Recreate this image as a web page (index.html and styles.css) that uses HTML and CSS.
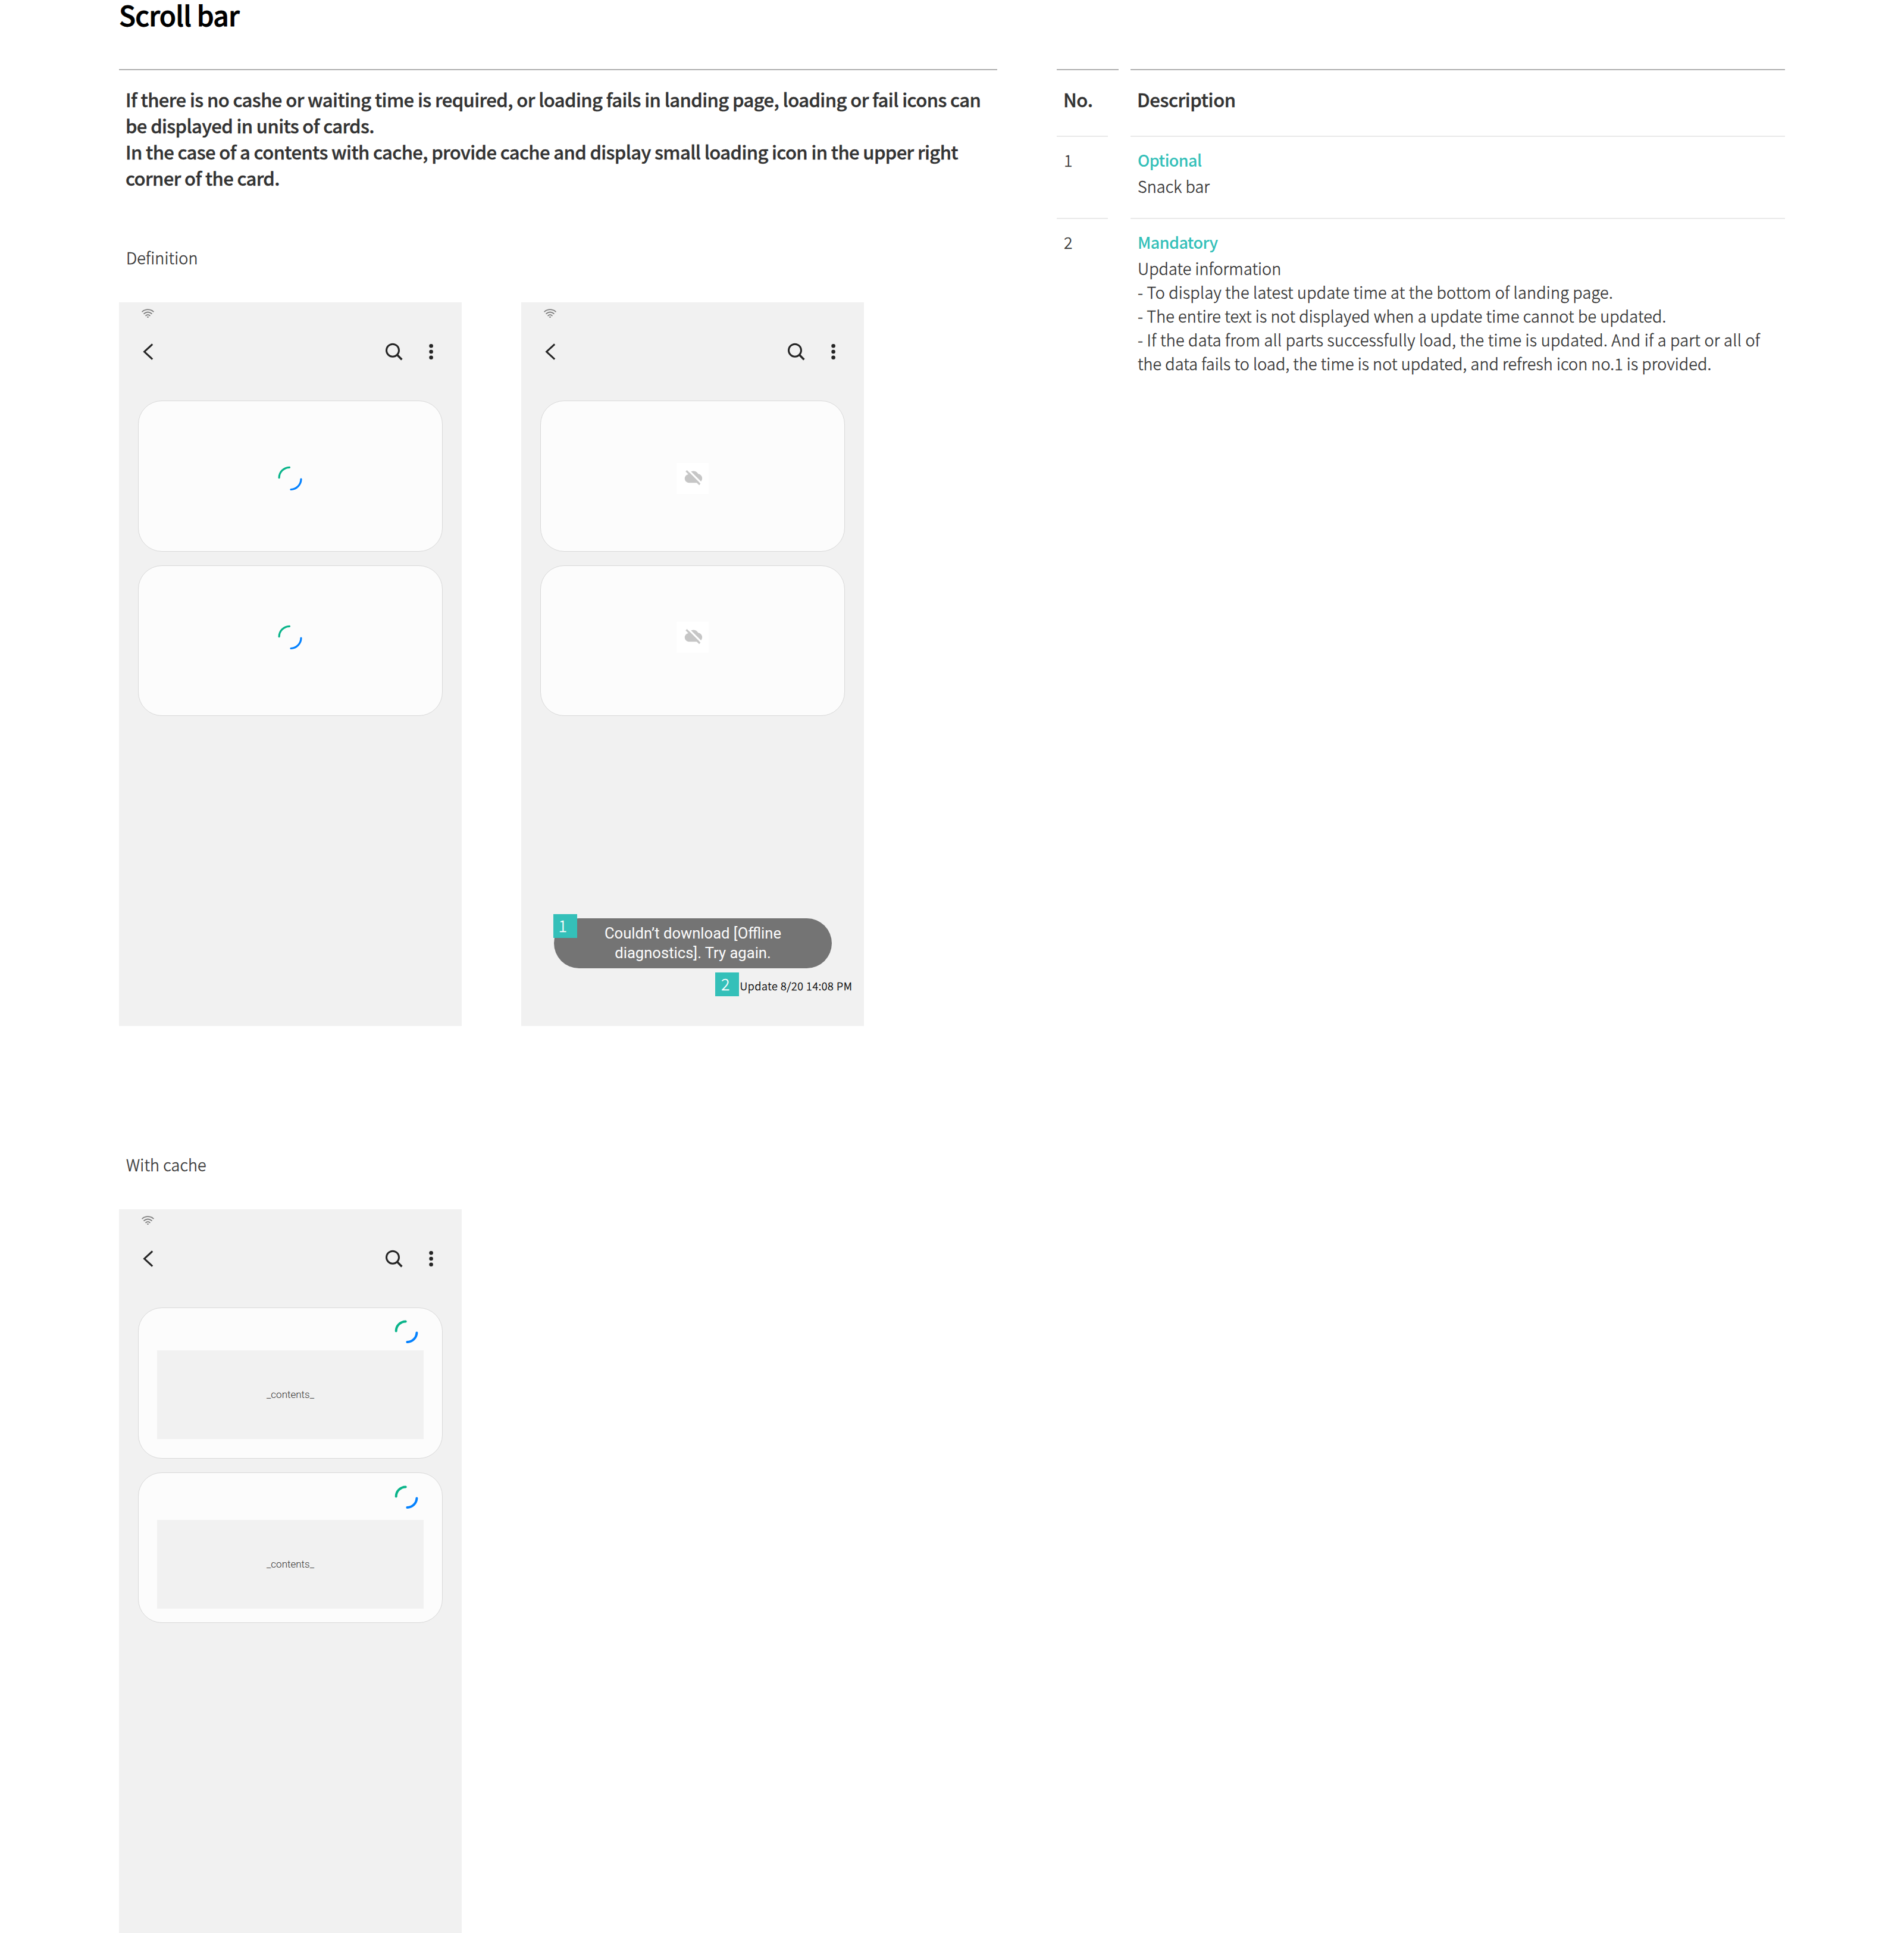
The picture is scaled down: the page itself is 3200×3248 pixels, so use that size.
FILE: index.html
```html
<!DOCTYPE html>
<html lang="en">
<head>
<meta charset="utf-8">
<title>Scroll bar</title>
<link rel="stylesheet" href="styles.css">
</head>
<body>
<svg class="defs" width="0" height="0">
  <symbol id="wifi" viewBox="0 0 21 15">
    <g fill="none" stroke="#808080" stroke-width="1.9" stroke-linecap="round">
      <path d="M1.2 4.6C6.3-.1 14.7-.1 19.8 4.6"/>
      <path d="M4.2 8c3.500-3.300 9.100-3.300 12.600 0"/>
      <path d="M7.200 11.300c1.800-1.700 4.800-1.700 6.600 0"/>
    </g>
    <circle cx="10.500" cy="13.700" r="1.300" fill="#808080"/>
  </symbol>
  <symbol id="back" viewBox="0 0 32 32">
    <path d="M24.200 3.400 10.600 16l13.600 12.600" fill="none" stroke="#252525" stroke-width="3"/>
  </symbol>
  <symbol id="search" viewBox="0 0 36 32">
    <g fill="none" stroke="#252525" stroke-width="3">
      <circle cx="16" cy="13.700" r="10.500"/>
      <path d="m23.500 21.200 7.900 8" stroke-width="3.400"/>
    </g>
  </symbol>
  <symbol id="more" viewBox="0 0 16 32">
    <g fill="#252525"><circle cx="8.600" cy="6.300" r="3.300"/><circle cx="8.600" cy="16" r="3.300"/><circle cx="8.600" cy="25.700" r="3.300"/></g>
  </symbol>
  <symbol id="spinner" viewBox="0 0 54 52">
    <g fill="none" stroke-width="3.200" stroke-linecap="round">
      <path d="M8.100 24.700A17.700 17.700 0 0 1 25.500 7.300" stroke="#0ab48a"/>
      <path d="M45 27A17.700 17.700 0 0 1 28 44.500" stroke="#0381fe"/>
    </g>
  </symbol>
  <symbol id="spinner-small" viewBox="0 0 54 52">
    <g fill="none" stroke-width="4" stroke-linecap="round">
      <path d="M9.700 24.500A16.200 16.200 0 0 1 25.700 8.400" stroke="#0ab48a"/>
      <path d="M44.400 27.500A16.200 16.200 0 0 1 28.400 43" stroke="#0381fe"/>
    </g>
  </symbol>
  <symbol id="cloud-off" viewBox="0 0 54 52">
    <path d="M20.400 33.200a7.200 7.200 0 0 1-.500-14.300A9.200 9.200 0 0 1 36.400 18.300a7.500 7.500 0 0 1 .300 14.900z" fill="#c6c6c6"/>
    <path d="M16.500 8.600 44.500 36.600" stroke="#fff" stroke-width="3.200"/>
    <path d="M16.400 13.200 39.200 36" stroke="#c6c6c6" stroke-width="3.200"/>
  </symbol>
</svg>

<main class="page">
  <section class="guide">
    <h1 class="title">Scroll bar</h1>
    <p class="intro"><span class="intro-first">If there is no cashe or waiting time is required, or loading fails in landing page, loading or fail icons can</span><br>be displayed in units of cards.<br>In the case of a contents with cache, provide cache and display small loading icon in the upper right<br>corner of the card.</p>

    <h2 class="caption caption-definition">Definition</h2>
    <div class="phones">
      <article class="phone">
        <div class="status"><svg width="21" height="15"><use href="#wifi"/></svg></div>
        <header class="appbar">
          <svg width="32" height="32"><use href="#back"/></svg>
          <svg class="search" width="36" height="32"><use href="#search"/></svg>
          <svg width="16" height="32"><use href="#more"/></svg>
        </header>
        <div class="cards">
          <div class="card"><svg width="54" height="52"><use href="#spinner"/></svg></div>
          <div class="card card-second"><svg width="54" height="52"><use href="#spinner"/></svg></div>
        </div>
      </article>
      <article class="phone">
        <div class="status"><svg width="21" height="15"><use href="#wifi"/></svg></div>
        <header class="appbar">
          <svg width="32" height="32"><use href="#back"/></svg>
          <svg class="search" width="36" height="32"><use href="#search"/></svg>
          <svg width="16" height="32"><use href="#more"/></svg>
        </header>
        <div class="cards">
          <div class="card"><svg class="slot-white" width="54" height="52"><use href="#cloud-off"/></svg></div>
          <div class="card card-second"><svg class="slot-white" width="54" height="52"><use href="#cloud-off"/></svg></div>
        </div>
        <footer class="footer">
          <div class="toast"><span class="badge badge-over">1</span>Couldn’t download [Offline<br>diagnostics]. Try again.</div>
          <div class="updated"><span class="badge badge-two">2</span><span class="updated-text">Update 8/20 14:08 PM</span></div>
        </footer>
      </article>
    </div>

    <h2 class="caption caption-cache">With cache</h2>
    <article class="phone">
      <div class="status"><svg width="21" height="15"><use href="#wifi"/></svg></div>
      <header class="appbar">
        <svg width="32" height="32"><use href="#back"/></svg>
        <svg class="search" width="36" height="32"><use href="#search"/></svg>
        <svg width="16" height="32"><use href="#more"/></svg>
      </header>
      <div class="cards">
        <div class="card cached"><svg class="corner" width="54" height="52"><use href="#spinner-small"/></svg><div class="contents">_contents_</div></div>
        <div class="card cached cached-second"><svg class="corner" width="54" height="52"><use href="#spinner-small"/></svg><div class="contents">_contents_</div></div>
      </div>
    </article>
  </section>

  <section class="spec">
    <div class="head">No.</div>
    <div class="head">Description</div>
    <div class="cell no">1</div>
    <div class="cell">
      <h3 class="tag">Optional</h3>
      <p class="name">Snack bar</p>
    </div>
    <div class="cell no">2</div>
    <div class="cell">
      <h3 class="tag">Mandatory</h3>
      <p class="name">Update information</p>
      <ul class="notes">
        <li>- To display the latest update time at the bottom of landing page.</li>
        <li class="snug">- The entire text is not displayed when a update time cannot be updated.</li>
        <li class="wide">- If the data from all parts successfully load, the time is updated. And if a part or all of<br><span class="tight">the data fails to load, the time is not updated, and refresh icon no.1 is provided.</span></li>
      </ul>
    </div>
  </section>
</main>
</body>
</html>
```
FILE: styles.css
```css
* { box-sizing: border-box; margin: 0; padding: 0; }

body {
  background: #fff;
  color: #333;
  font-family: "Noto Sans CJK SC", "Noto Sans", sans-serif;
  font-weight: 300;
  font-size: 27px;
  letter-spacing: 0.25px;
}

svg { display: block; flex: none; }
.defs { position: absolute; }

.page {
  display: grid;
  grid-template-columns: 1476px 1224px;
  column-gap: 100px;
  align-items: start;
  width: 3200px;
  height: 3248px;
  padding: 0 200px;
  overflow: hidden;
}

/* Left column */
.title {
  height: 116px;
  color: #000;
  font-size: 46px;
  font-weight: 500;
  line-height: 48px;
  letter-spacing: -0.75px;
  -webkit-text-stroke: 0.8px #000;
}

.intro {
  height: 296px;
  padding: 26.5px 0 0 11px;
  border-top: 2px solid #b0b0b0;
  font-size: 31px;
  font-weight: 500;
  line-height: 44px;
  letter-spacing: -0.63px;
  white-space: nowrap;
  -webkit-text-stroke: 0.4px #333;
}
.intro-first { letter-spacing: -0.59px; }

.caption {
  height: 96px;
  padding: 1px 0 0 12px;
  font-size: 27px;
  font-weight: 300;
  line-height: 40px;
  letter-spacing: 0.15px;
  -webkit-text-stroke: 0.4px #333;
}
.caption-cache { margin-top: 212px; }

.phones { display: flex; gap: 100px; }

.phone {
  display: flex;
  flex-direction: column;
  width: 576px;
  height: 1216px;
  background: #f1f1f1;
}

.status { height: 67px; padding: 11px 0 0 38px; }

.appbar {
  display: flex;
  gap: 36px;
  height: 98px;
  padding: 0 44px 0 32px;
}
.search { margin-left: auto; }

.cards {
  display: flex;
  flex-direction: column;
  gap: 22.8px;
  padding: 0 32px;
}

.card {
  display: flex;
  flex-direction: column;
  align-items: center;
  height: 253.8px;
  padding-top: 103.5px;
  border: 1px solid #d9d9d9;
  border-radius: 40px;
  background: #fcfcfc;
}
.card-second { padding-top: 94px; }
.slot-white { background: #fff; }

.cached { padding-top: 14px; gap: 5.3px; }
.cached-second { padding-top: 15.4px; gap: 12px; }
.corner { align-self: flex-end; margin-right: 33px; }

.contents {
  width: 448px;
  height: 149px;
  background: #f1f1f1;
  font: 300 17px/149px Roboto, sans-serif;
  letter-spacing: 0;
  text-align: center;
}

.footer { margin-top: auto; padding-bottom: 50px; }

.toast {
  position: relative;
  width: 467px;
  height: 84px;
  margin-left: 55px;
  padding-top: 8.5px;
  border-radius: 42px;
  background: #747474;
  color: #fcfcfc;
  font: 400 25.6px/33.3px Roboto, sans-serif;
  letter-spacing: 0;
  text-align: center;
}

.badge {
  flex: none;
  width: 40px;
  height: 40px;
  padding-left: 8.5px;
  background: #34c0b9;
  color: #fff;
  font: 300 27px/37px "Noto Sans CJK SC", sans-serif;
  text-align: left;
  -webkit-text-stroke: 0.3px #fff;
}
.badge-over { position: absolute; left: -1px; top: -7px; }
.badge-two { padding-left: 10px; }

.updated {
  display: flex;
  height: 40px;
  margin: 7px 0 0 326px;
}
.updated-text {
  padding-left: 1.5px;
  color: #000;
  font-size: 18px;
  font-weight: 300;
  line-height: 44px;
  letter-spacing: 0.65px;
  white-space: nowrap;
  -webkit-text-stroke: 0.4px #000;
}

/* Right column */
.spec {
  display: grid;
  grid-template-columns: 104px 1100px;
  column-gap: 20px;
  margin-top: 116px;
}

.head {
  height: 110px;
  margin-bottom: 2px;
  padding: 26.5px 0 0 11px;
  border-top: 2px solid #b0b0b0;
  font-size: 31px;
  font-weight: 500;
  line-height: 44px;
  letter-spacing: -0.4px;
  -webkit-text-stroke: 0.4px #333;
}

.cell {
  padding: 17px 0 0 12px;
  border-top: 2px solid #e9e9e9;
  line-height: 44px;
  -webkit-text-stroke: 0.4px currentColor;
}
.cell:nth-child(4) { height: 138px; }
.cell.no { width: 86px; }

.tag {
  color: #34c0b9;
  font-size: 27px;
  font-weight: 500;
  letter-spacing: -0.6px;
  -webkit-text-stroke: 0;
}

.name { letter-spacing: 0.1px; }

.notes {
  margin-top: -2.4px;
  line-height: 40px;
  list-style: none;
  white-space: nowrap;
}
.snug { letter-spacing: 0.17px; }
.wide { letter-spacing: 0.32px; }
.tight { letter-spacing: 0.12px; }
```
